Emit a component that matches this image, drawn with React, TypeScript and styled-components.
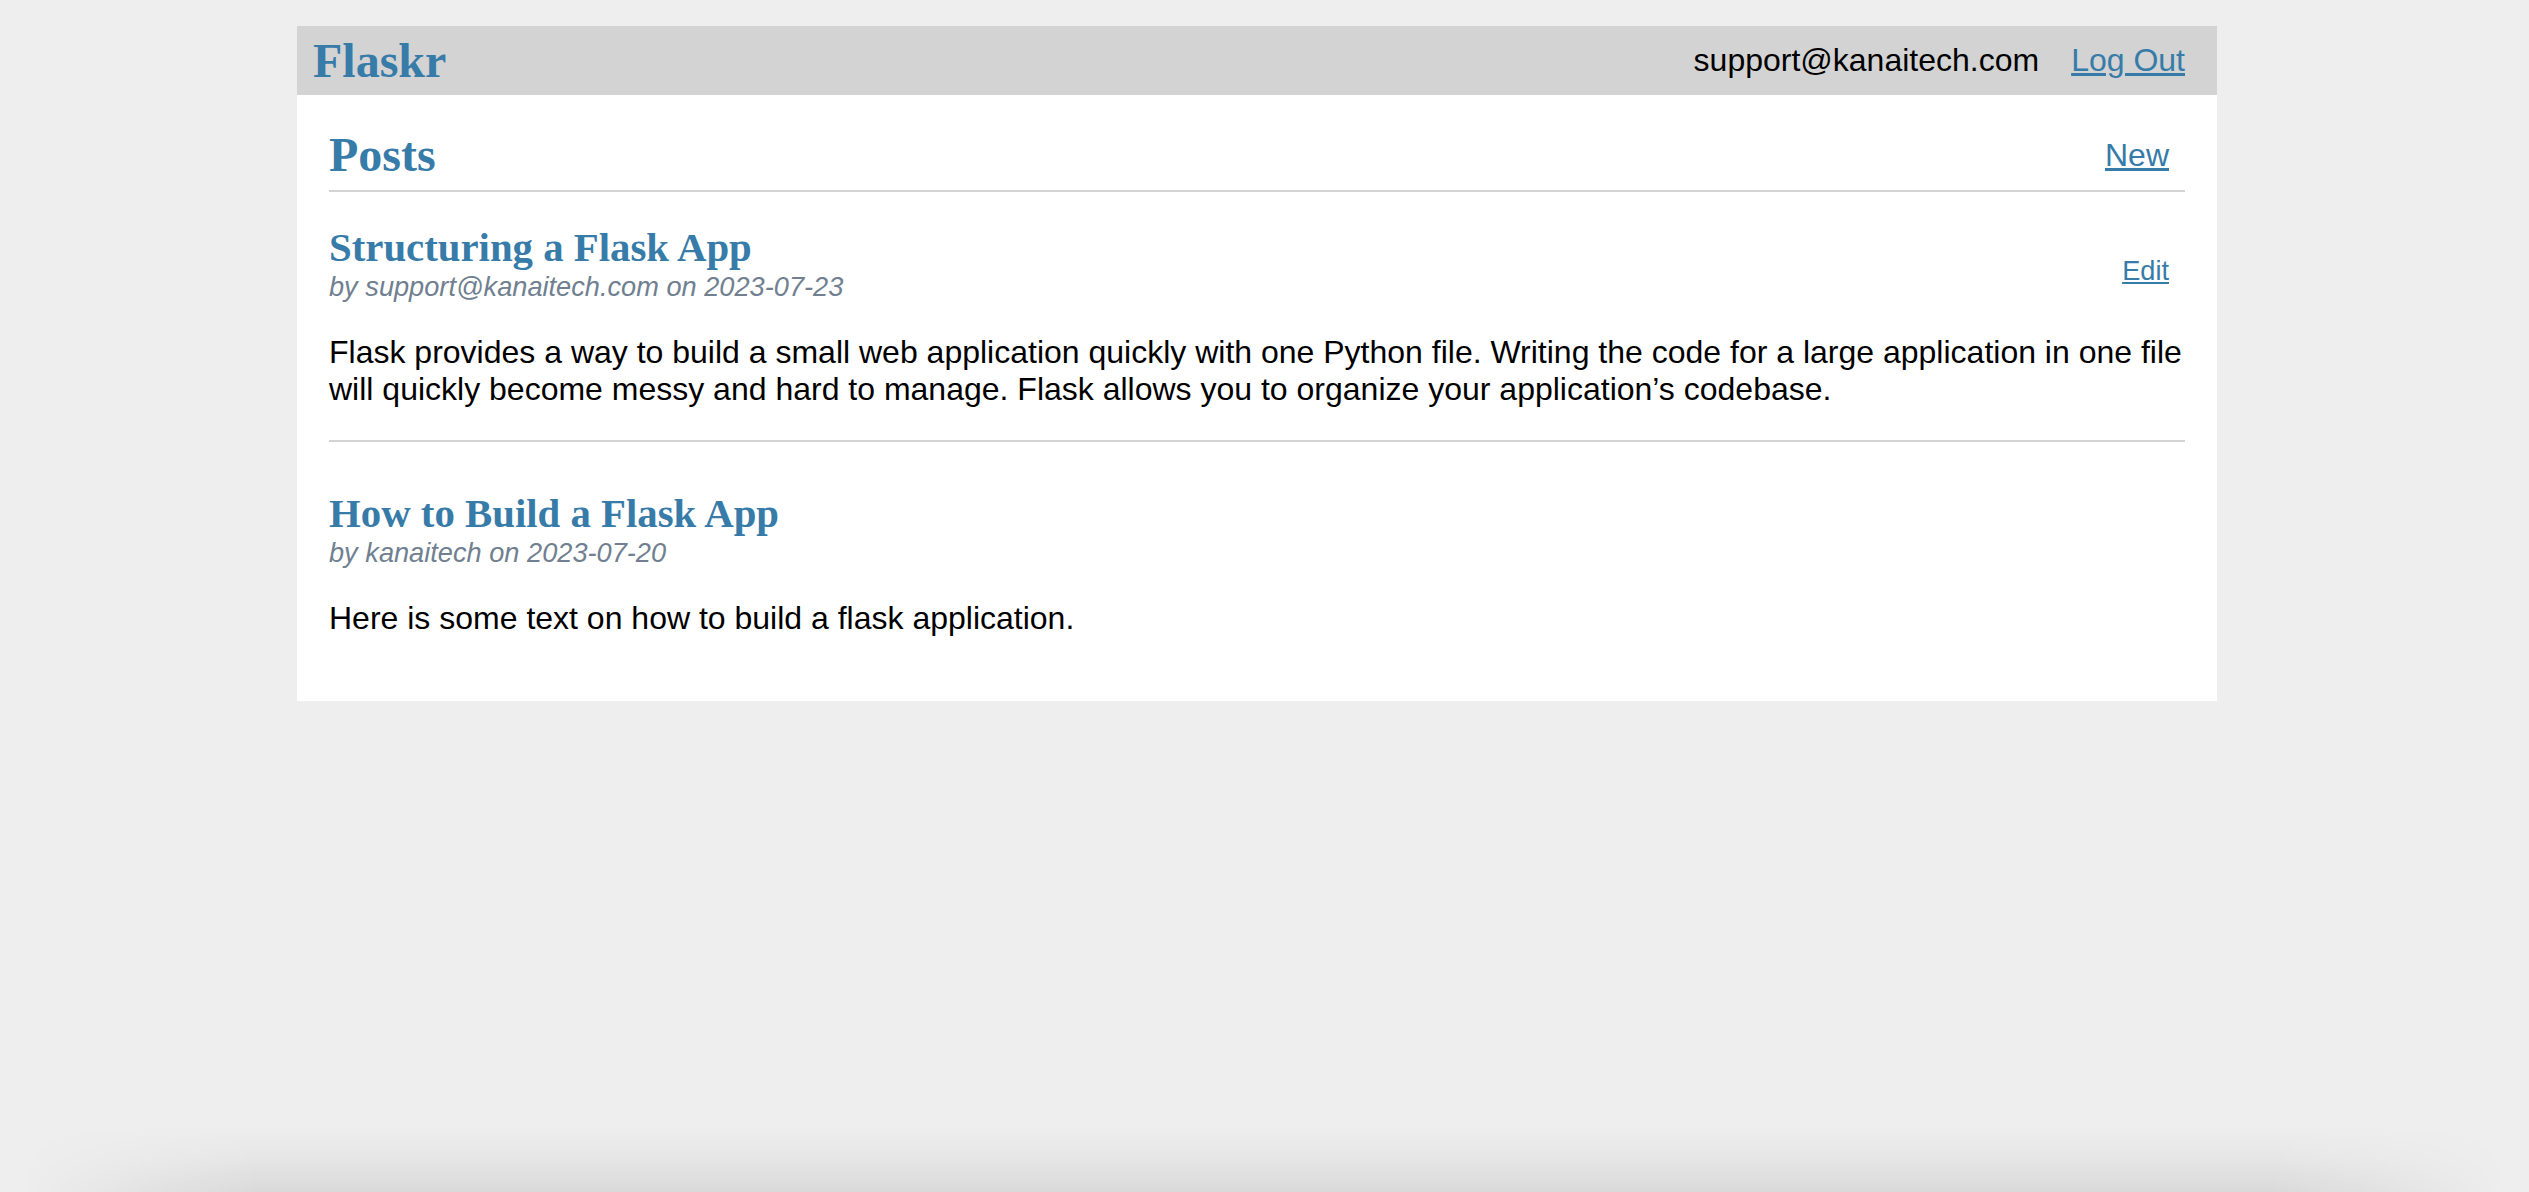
import React from "react";
import styled, { createGlobalStyle } from "styled-components";

const GlobalStyle = createGlobalStyle`
  html, body {
    margin: 0;
    padding: 0;
    background: #eeeeee;
  }
  body {
    font-family: "Liberation Sans", Arial, Helvetica, sans-serif;
    font-size: 32px;
    line-height: 37px;
    color: #000;
  }
`;

const Page = styled.div`
  min-height: 100vh;
  box-sizing: border-box;
  padding: 26px 47px 0 32px;
`;

const Container = styled.div`
  max-width: 1920px;
  margin: 0 auto;
  background: #ffffff;
`;

const Nav = styled.nav`
  display: flex;
  align-items: center;
  background: #d3d3d3;
  padding: 0 16px;
`;

const Brand = styled.h1`
  flex: auto;
  margin: 0;
  font-family: "Liberation Serif", "Times New Roman", serif;
  font-size: 48px;
  line-height: 55px;
  font-weight: bold;

  a {
    color: #377ba8;
    text-decoration: none;
  }
`;

const NavList = styled.ul`
  display: flex;
  list-style: none;
  margin: 0;
  padding: 0;
`;

const NavItem = styled.li``;

const NavText = styled.span`
  display: block;
  padding: 16px;
`;

const NavLink = styled.a`
  display: block;
  padding: 16px;
  color: #377ba8;
  text-decoration: underline;
`;

const Content = styled.section`
  padding: 0 32px 32px;
`;

const PageHeader = styled.header`
  display: flex;
  align-items: flex-end;
  border-bottom: 2px solid #d3d3d3;
`;

const PageTitle = styled.h1`
  flex: auto;
  margin: 32px 0 8px;
  font-family: "Liberation Serif", "Times New Roman", serif;
  font-size: 48px;
  line-height: 55px;
  font-weight: bold;
  color: #377ba8;
`;

const Action = styled.a<{ $small?: boolean }>`
  display: block;
  padding: 16px;
  color: #377ba8;
  text-decoration: underline;
  font-size: ${(p) => (p.$small ? "27.2px" : "32px")};
  line-height: ${(p) => (p.$small ? "31px" : "37px")};
`;

const Post = styled.article``;

const PostHeader = styled.header`
  display: flex;
  align-items: flex-end;
  font-size: 27.2px;
  line-height: 31px;
`;

const PostHead = styled.div`
  flex: auto;
`;

const PostTitle = styled.h1`
  margin: 32px 0 0;
  font-family: "Liberation Serif", "Times New Roman", serif;
  font-size: 40.8px;
  line-height: 47px;
  font-weight: bold;
  color: #377ba8;
`;

const About = styled.div`
  color: #708090;
  font-style: italic;
`;

const PostBody = styled.p`
  margin: 32px 0;
  white-space: pre-line;
`;

const Divider = styled.hr`
  border: none;
  border-top: 2px solid #d3d3d3;
  margin: 16px 0;
`;

const BottomShade = styled.div`
  position: fixed;
  left: 0;
  right: 0;
  bottom: 0;
  height: 66px;
  pointer-events: none;
  background: linear-gradient(
    to bottom,
    rgba(0, 0, 0, 0) 0%,
    rgba(0, 0, 0, 0.03) 50%,
    rgba(0, 0, 0, 0.085) 100%
  );
  -webkit-mask-image: linear-gradient(
    to right,
    transparent 20px,
    #000 260px,
    #000 calc(100% - 260px),
    transparent calc(100% - 20px)
  );
  mask-image: linear-gradient(
    to right,
    transparent 20px,
    #000 260px,
    #000 calc(100% - 260px),
    transparent calc(100% - 20px)
  );
`;

type PostData = {
  title: string;
  author: string;
  date: string;
  body: string;
  editable: boolean;
};

const posts: PostData[] = [
  {
    title: "Structuring a Flask App",
    author: "support@kanaitech.com",
    date: "2023-07-23",
    body:
      "Flask provides a way to build a small web application quickly with one Python file. Writing the code for a large application in one file\nwill quickly become messy and hard to manage. Flask allows you to organize your application\u2019s codebase.",
    editable: true,
  },
  {
    title: "How to Build a Flask App",
    author: "kanaitech",
    date: "2023-07-20",
    body: "Here is some text on how to build a flask application.",
    editable: false,
  },
];

export default function App() {
  return (
    <>
      <GlobalStyle />
      <Page>
        <Container>
          <Nav>
            <Brand>
              <a href="#">Flaskr</a>
            </Brand>
            <NavList>
              <NavItem>
                <NavText>support@kanaitech.com</NavText>
              </NavItem>
              <NavItem>
                <NavLink href="#">Log Out</NavLink>
              </NavItem>
            </NavList>
          </Nav>
          <Content>
            <PageHeader>
              <PageTitle>Posts</PageTitle>
              <Action href="#">New</Action>
            </PageHeader>
            {posts.map((post, i) => (
              <React.Fragment key={post.title}>
                <Post>
                  <PostHeader>
                    <PostHead>
                      <PostTitle>{post.title}</PostTitle>
                      <About>
                        by {post.author} on {post.date}
                      </About>
                    </PostHead>
                    {post.editable && (
                      <Action $small href="#">
                        Edit
                      </Action>
                    )}
                  </PostHeader>
                  <PostBody>{post.body}</PostBody>
                </Post>
                {i < posts.length - 1 && <Divider />}
              </React.Fragment>
            ))}
          </Content>
        </Container>
      </Page>
      <BottomShade />
    </>
  );
}
